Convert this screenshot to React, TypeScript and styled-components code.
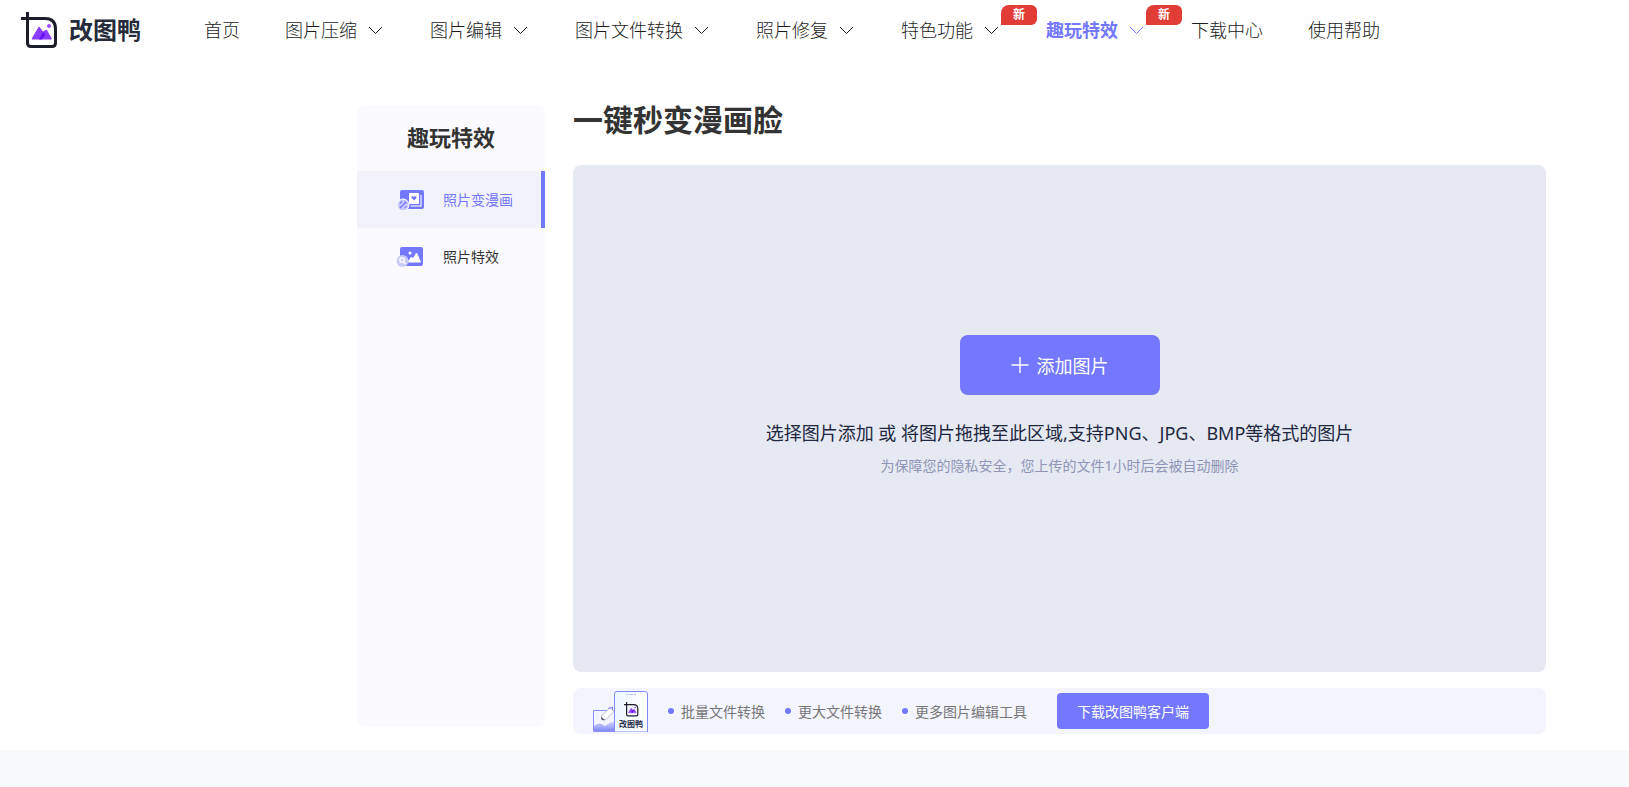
import React from "react";
import styled, { createGlobalStyle, css } from "styled-components";

const GlobalStyle = createGlobalStyle`
  *, *::before, *::after { box-sizing: border-box; }
  body {
    margin: 0;
    background: #f8f9fc;
    color: #333;
    font-family: "Noto Sans", "Noto Sans CJK SC", sans-serif;
    font-size: 14px;
  }
  a { color: inherit; text-decoration: none; }
  ul { margin: 0; padding: 0; list-style: none; }
  button { font-family: inherit; border: 0; cursor: pointer; }
`;

const Page = styled.div`
  background: #fff;
`;

const Header = styled.header`
  display: flex;
  align-items: center;
  height: 60px;
  padding-left: 20px;
`;

const Brand = styled.a`
  display: flex;
  align-items: center;
  gap: 12px;
  width: 184px;
  color: #252b3a;
  font-size: 24px;
  font-weight: 700;
  line-height: 32px;
`;

const NavList = styled.ul`
  display: flex;
  gap: 45px;
  white-space: nowrap;
`;

const NavItem = styled.li<{ $active?: boolean }>`
  position: relative;
  color: #1c1c1c;
  font-size: 18px;
  font-weight: 300;
  line-height: 28px;
  ${(p) => p.$active && css`color: #7378ff; font-weight: 700;`}
`;

const NavLink = styled.a`
  display: flex;
  align-items: center;
  gap: 10px;
`;

const Badge = styled.span`
  position: absolute;
  left: 100%;
  top: -11px;
  width: 36px;
  height: 20px;
  border-radius: 8px 6px 6px 0;
  background: #e13c35;
  color: #fff;
  font-size: 12px;
  font-weight: 700;
  line-height: 19px;
  text-align: center;
`;

const Content = styled.div`
  display: flex;
  align-items: flex-start;
  gap: 28px;
  padding: 45px 83px 16px 357px;
`;

const Sidebar = styled.aside`
  flex: none;
  width: 188px;
  min-height: 622px;
  border-radius: 8px;
  background: #fbfbff;
`;

const SidebarTitle = styled.h2`
  margin: 0;
  padding-bottom: 2px;
  font-size: 22px;
  line-height: 64px;
  text-align: center;
`;

const SideLink = styled.a<{ $active?: boolean }>`
  display: flex;
  align-items: center;
  gap: 19px;
  height: 57px;
  padding-left: 39px;
  line-height: 20px;
  ${(p) => p.$active && css`
    border-right: 4px solid #7378ff;
    background: #f1f2fa;
    color: #7378ff;
  `}
`;

const Main = styled.main`
  flex: 1;
  min-width: 0;
`;

const PageTitle = styled.h1`
  margin: 0;
  padding-bottom: 30px;
  font-size: 30px;
  line-height: 30px;
`;

const DropZone = styled.section`
  display: flex;
  flex-direction: column;
  align-items: center;
  min-height: 507px;
  padding-top: 170px;
  border-radius: 8px;
  background: #e6e9f2;
  text-align: center;
`;

const AddButton = styled.button`
  display: flex;
  align-items: center;
  justify-content: center;
  gap: 8px;
  width: 200px;
  height: 60px;
  border-radius: 8px;
  background: #7378ff;
  color: #fff;
  font-size: 18px;
`;

const DropText = styled.p`
  margin: 24px 0 0;
  color: #222741;
  font-size: 18px;
  line-height: 28px;
`;

const PrivacyNote = styled.p`
  margin: 8px 0 0;
  color: #8f94b8;
  font-size: 14px;
  line-height: 22px;
`;

const ClientBar = styled.section`
  display: flex;
  align-items: center;
  height: 46px;
  margin-top: 16px;
  padding-left: 20px;
  border-radius: 8px;
  background: #f3f4fe;
`;

const Features = styled.ul`
  display: flex;
  gap: 20px;
  margin: 0 30px 0 20px;
  color: #777;
  white-space: nowrap;
`;

const Feature = styled.li`
  display: flex;
  align-items: center;
  gap: 7px;
  &::before {
    content: "";
    width: 6px;
    height: 6px;
    border-radius: 50%;
    background: #7378ff;
  }
`;

const DownloadButton = styled.button`
  width: 152px;
  height: 36px;
  border-radius: 4px;
  background: #7378ff;
  color: #fff;
  font-size: 14px;
`;

const Footer = styled.footer`
  height: 37px;
`;

const Mark = () => (
  <>
    <path d="M6.500 0V31Q6.500 34.500 10 34.500H31Q34.500 34.500 34.500 31V17Q34.500 6.500 24 6.500H0" fill="none" stroke="#1b1d2b" strokeWidth="3" />
    <path d="M11 27 18 15 22 20 25.500 18 30.500 27Z" fill="#8a3dff" stroke="#8a3dff" strokeLinejoin="round" />
    <path d="M18 27.500 22 20 24.500 22 21 27.500Z" fill="#6414f5" />
    <circle cx="28" cy="14" r="2" fill="#9a4bff" />
  </>
);

const Logo = () => (
  <svg width="37" height="36" viewBox="-1 0 37 36" aria-hidden="true"><Mark /></svg>
);

const Chevron = () => (
  <svg width="18" height="10" viewBox="0 0 18 10" fill="none" stroke="currentColor" strokeWidth="1" aria-hidden="true">
    <path d="M2 2 8.500 8.500 15 2" />
  </svg>
);

const Plus = () => (
  <svg width="18" height="18" viewBox="0 0 18 18" stroke="#fff" strokeWidth="1.400" aria-hidden="true">
    <path d="M9 1V17M.5 9H17.500" />
  </svg>
);

const ComicIcon = () => (
  <svg width="28" height="24" viewBox="0 0 28 24" aria-hidden="true">
    <rect x="4" y="2" width="24" height="19" rx="2" fill="#7378ff" />
    <path d="M15 18H25V7" fill="none" stroke="#fff" strokeOpacity=".75" strokeWidth="1.500" />
    <rect x="13" y="5" width="10" height="11" rx="1" fill="#fff" />
    <path d="M18 12.500 15.500 10Q15 8 16.800 8L18 9 19.200 8Q21 8 20.500 10Z" fill="#7378ff" />
    <circle cx="7" cy="17" r="6" fill="#c9cbfb" stroke="#fff" />
    <path d="M4 20 9.500 14.500M8.500 13.500l2 2M4 15.500l2-2M8.500 19.500l2-1" stroke="#7378ff" strokeWidth="1.300" />
  </svg>
);

const EffectIcon = () => (
  <svg width="28" height="24" viewBox="0 0 28 24" aria-hidden="true">
    <rect x="4" y="2" width="23" height="19" rx="2" fill="#7378ff" />
    <circle cx="14" cy="8" r="1.500" fill="#fff" />
    <path d="M12 17 15.500 12 17 14 20.500 8 24.500 17Z" fill="#fff" stroke="#fff" strokeLinejoin="round" />
    <circle cx="6.500" cy="16" r="6" fill="#c9cbfb" />
    <circle cx="6" cy="15" r="2.200" fill="none" stroke="#fff" strokeWidth="1.300" />
    <path d="M7.500 17 9.500 19" stroke="#fff" strokeWidth="1.300" />
  </svg>
);

const ClientArt = () => (
  <svg width="55" height="42" viewBox="0 0 55 42" aria-hidden="true">
    <defs>
      <linearGradient id="hill" x1="0" y1="0" x2="0" y2="1">
        <stop offset="0" stopColor="#d9dbfe" />
        <stop offset="1" stopColor="#8188fb" />
      </linearGradient>
      <linearGradient id="phone" x1="0" y1="0" x2="1" y2="0">
        <stop offset="0" stopColor="#eef7ff" />
        <stop offset="1" stopColor="#fff" />
      </linearGradient>
    </defs>
    <path d="M.5 20.500H22V41.500H.5Z" fill="#f4f4ff" stroke="#8b91f8" />
    <path d="M1 36Q6 31 12 36Q17 32 22 31V41H1Z" fill="url(#hill)" />
    <path d="M8.500 26 16 18.500Q18 17 21 21.500L13 29.500Q8 31 8.500 26Z" fill="#fff" stroke="#b9bcd9" />
    <path d="M8 27Q8 31 12 30L9.500 28Z" fill="#4d5168" />
    <path d="M15 18.500 19.500 17V20" fill="none" stroke="#7c83fa" />
    <path d="M21.500 42V4Q21.500 1.500 24 1.500H51.500Q54.500 1.500 54.500 4V42Z" fill="url(#phone)" stroke="#8289f8" />
    <path d="M33 4.500H43" stroke="#b9bdfc" strokeDasharray="2 1 4 1" />
    <g transform="translate(31 12) scale(.4)"><Mark /></g>
    <text x="38" y="37" textAnchor="middle" fontSize="8" fontWeight="700" fill="#252b4a">改图鸭</text>
  </svg>
);

const nav = [
  { label: "首页" },
  { label: "图片压缩", menu: true },
  { label: "图片编辑", menu: true },
  { label: "图片文件转换", menu: true },
  { label: "照片修复", menu: true },
  { label: "特色功能", menu: true, isNew: true },
  { label: "趣玩特效", menu: true, isNew: true, active: true },
  { label: "下载中心" },
  { label: "使用帮助" },
];

const features = ["批量文件转换", "更大文件转换", "更多图片编辑工具"];

export default function App() {
  return (
    <>
      <GlobalStyle />
      <Page>
        <Header>
          <Brand href="#"><Logo />改图鸭</Brand>
          <nav>
            <NavList>
              {nav.map((item) => (
                <NavItem key={item.label} $active={item.active}>
                  <NavLink href="#">
                    {item.label}
                    {item.menu && <Chevron />}
                  </NavLink>
                  {item.isNew && <Badge>新</Badge>}
                </NavItem>
              ))}
            </NavList>
          </nav>
        </Header>
        <Content>
          <Sidebar>
            <SidebarTitle>趣玩特效</SidebarTitle>
            <SideLink href="#" $active><ComicIcon />照片变漫画</SideLink>
            <SideLink href="#"><EffectIcon />照片特效</SideLink>
          </Sidebar>
          <Main>
            <PageTitle>一键秒变漫画脸</PageTitle>
            <DropZone>
              <AddButton type="button"><Plus />添加图片</AddButton>
              <DropText>选择图片添加 或 将图片拖拽至此区域,支持PNG、JPG、BMP等格式的图片</DropText>
              <PrivacyNote>为保障您的隐私安全，您上传的文件1小时后会被自动删除</PrivacyNote>
            </DropZone>
            <ClientBar>
              <ClientArt />
              <Features>
                {features.map((text) => <Feature key={text}>{text}</Feature>)}
              </Features>
              <DownloadButton type="button">下载改图鸭客户端</DownloadButton>
            </ClientBar>
          </Main>
        </Content>
      </Page>
      <Footer />
    </>
  );
}
